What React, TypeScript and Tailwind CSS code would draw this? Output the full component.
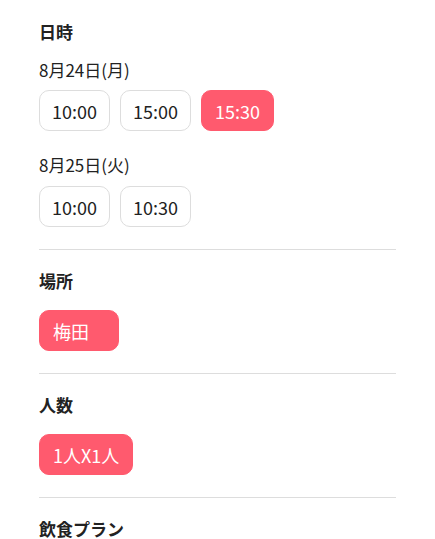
const font = { fontFamily: '"Noto Sans CJK JP", "Noto Sans", sans-serif' };

type Opt = { label: string; active?: boolean; wide?: boolean };

const Chip = ({ label, active, wide }: Opt) => (
  <button
    className={
      active
        ? `h-[41px] rounded-[10px] border border-[#ff5a6e] bg-[#ff5a6e] px-[13px] text-left text-[18px] leading-none text-white ${wide ? "min-w-[80px]" : ""}`
        : "h-[41px] rounded-[10px] border border-[#dddddd] bg-white px-3 text-[18px] leading-none text-[#222222]"
    }
  >
    {label}
  </button>
);

const Section = ({ title, options }: { title: string; options: Opt[] }) => (
  <div className="border-t border-[#dddddd] pt-[19px] pb-[22px]">
    <h2 className="text-[17px] font-bold leading-6 text-[#222222]">{title}</h2>
    <div className="mt-[17px] flex gap-[10px]">
      {options.map((o) => (
        <Chip key={o.label} {...o} />
      ))}
    </div>
  </div>
);

export default function App() {
  return (
    <div className="min-h-screen bg-white pl-[39px] pr-[39px] pt-5" style={font}>
      <div className="w-[357px]">
        {/* 日時 */}
        <div className="pb-[22px]">
          <h2 className="text-[17px] font-bold leading-6 text-[#222222]">日時</h2>
          <p className="mt-[14px] text-[17px] leading-6 text-[#222222]">8月24日(月)</p>
          <div className="mt-2 flex gap-[10px]">
            <Chip label="10:00" />
            <Chip label="15:00" />
            <Chip label="15:30" active />
          </div>
          <p className="mt-[22px] text-[17px] leading-6 text-[#222222]">8月25日(火)</p>
          <div className="mt-[9px] flex gap-[10px]">
            <Chip label="10:00" />
            <Chip label="10:30" />
          </div>
        </div>

        <Section title="場所" options={[{ label: "梅田", active: true, wide: true }]} />
        <Section title="人数" options={[{ label: "1人X1人", active: true }]} />

        <div className="border-t border-[#dddddd] pt-[19px]">
          <h2 className="text-[17px] font-bold leading-6 text-[#222222]">飲食プラン</h2>
        </div>
      </div>
    </div>
  );
}
